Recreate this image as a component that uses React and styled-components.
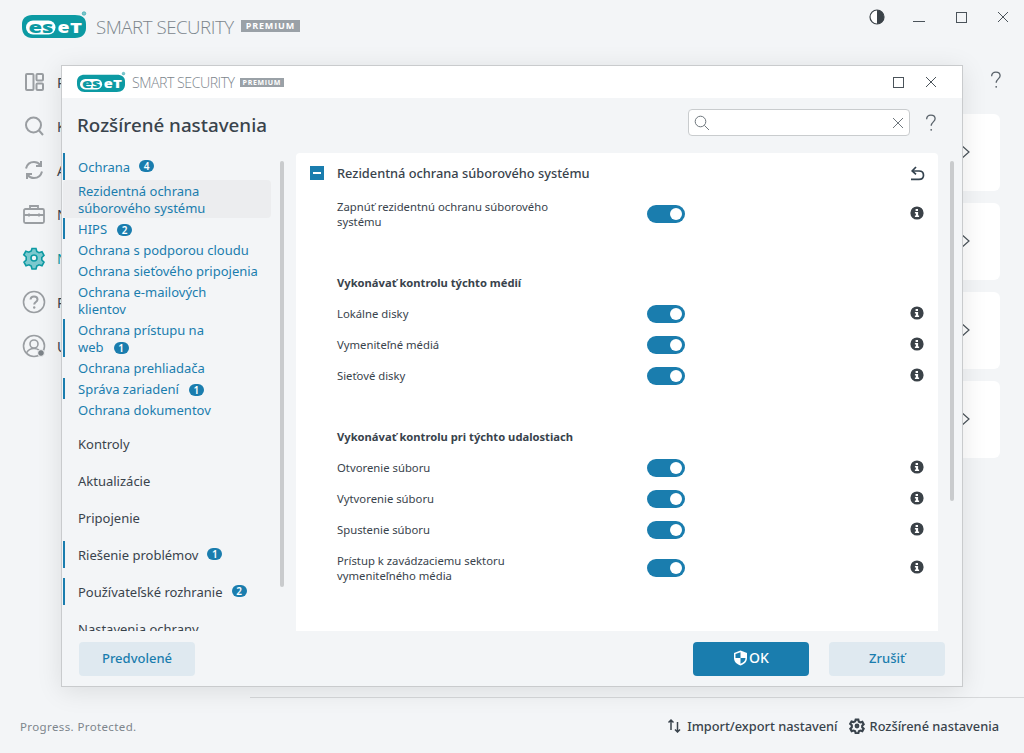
import React from "react";
import styled, { createGlobalStyle } from "styled-components";

const Global = createGlobalStyle`
  html, body { margin: 0; padding: 0; height: 100%; overflow: hidden; }
  body { font-family: "Noto Sans", "Open Sans", sans-serif; background: #f3f5f7; color: #38434c; }
  * { box-sizing: border-box; }
`;

const BLUE = "#1a7dae";
const TEAL = "#0c9aa3";
const INK = "#39434c";

/* ---------- page behind the dialog ---------- */
const Page = styled.div`
  position: relative;
  width: 1024px;
  height: 753px;
  display: flex;
  flex-direction: column;
  overflow: hidden;
  background: #f3f5f7;
`;
const TopBar = styled.header`
  height: 70px;
  padding: 14px 0 0 22px;
  display: flex;
  align-items: flex-start;
  justify-content: space-between;
`;
const Brand = styled.div`
  display: flex;
  align-items: center;
  height: ${p => (p.$small ? 18 : 24)}px;
  margin-top: ${p => (p.$small ? 1 : 0)}px;
`;
const BrandName = styled.span`
  font-family: "Open Sans", sans-serif;
  font-weight: 300;
  font-size: ${p => (p.$small ? 14.2 : 18.7)}px;
  letter-spacing: ${p => (p.$small ? -0.5 : -0.48)}px;
  color: #7c858c;
  margin-left: ${p => (p.$small ? 7 : 10)}px;
  white-space: nowrap;
`;
const Badge = styled.span`
  background: #9aa1a7;
  color: #fff;
  font-family: "Open Sans", sans-serif;
  font-weight: 700;
  font-size: ${p => (p.$small ? 7 : 9)}px;
  letter-spacing: ${p => (p.$small ? 0.65 : 0.85)}px;
  line-height: ${p => (p.$small ? 9 : 12)}px;
  padding: 0 ${p => (p.$small ? 3 : 5)}px;
  margin-left: ${p => (p.$small ? 5 : 7)}px;
`;
const WindowControls = styled.div`
  display: flex;
  align-items: center;
  height: 16px;
  margin-top: -5px;
`;
const CtlSlot = styled.span`
  width: ${p => p.$w}px;
  display: flex;
  justify-content: center;
  color: #4a535a;
`;
const Body = styled.div`
  flex: 1;
  display: flex;
  min-height: 0;
`;
const SideNav = styled.nav`
  width: 250px;
  padding: 0 0 0 22px;
  display: flex;
  flex-direction: column;
  gap: 20px;
`;
const SideItem = styled.div`
  height: 24px;
  display: flex;
  align-items: center;
  gap: 11px;
  font-size: 14px;
  color: ${p => (p.$active ? TEAL : INK)};
`;
const MainArea = styled.main`
  flex: 1;
  position: relative;
  padding: 0 24px 0 20px;
`;
const HelpRow = styled.div`
  height: 44px;
  margin-right: -6px;
  display: flex;
  justify-content: flex-end;
  align-items: flex-start;
  color: #59626a;
`;
const Cards = styled.div`
  display: flex;
  flex-direction: column;
  gap: 12px;
`;
const Card = styled.div`
  height: 77px;
  background: #fff;
  border-radius: 6px;
  display: flex;
  align-items: center;
  justify-content: flex-end;
  padding: 0 30px 1px 0;
  color: #4a535a;
`;
const Footer = styled.footer`
  height: 56px;
  margin-left: 250px;
  border-top: 1px solid #d6d8da;
  display: flex;
  align-items: center;
  justify-content: flex-end;
  padding-right: 25px;
  gap: 11px;
`;
const Tagline = styled.span`
  position: absolute;
  left: 20px;
  bottom: 19px;
  font-size: 11.5px;
  letter-spacing: 0.38px;
  color: #7d858c;
`;
const FooterLink = styled.span`
  display: flex;
  align-items: center;
  gap: 5px;
  font-size: 12.8px;
  font-weight: 500;
  color: ${INK};
`;

/* ---------- dialog window ---------- */
const Dialog = styled.section`
  position: absolute;
  left: 61px;
  top: 65px;
  width: 902px;
  height: 622px;
  background: #f3f5f7;
  border: 1px solid #c9cbcd;
  box-shadow: 0 4px 24px rgba(0, 0, 0, 0.1);
  display: flex;
  flex-direction: column;
`;
const TitleBar = styled.div`
  height: 32px;
  flex: none;
  background: #fff;
  padding: 0 15px;
  display: flex;
  align-items: center;
  justify-content: space-between;
`;
const DlgControls = styled.div`
  display: flex;
  gap: 21px;
  align-items: center;
  color: #4a535a;
  margin-right: 10px;
`;
const DlgHeader = styled.div`
  height: 55px;
  flex: none;
  padding: 0 21px 0 15px;
  display: flex;
  align-items: center;
  justify-content: space-between;
`;
const Title = styled.h1`
  margin: -1px 0 0;
  font-size: 18.8px;
  font-weight: 500;
  color: ${INK};
`;
const SearchWrap = styled.div`
  display: flex;
  align-items: center;
  gap: 11px;
  color: #59626a;
  margin-top: -6px;
`;
const SearchBox = styled.div`
  width: 222px;
  height: 27px;
  background: #fff;
  border: 1px solid #c9ccce;
  border-radius: 4px;
  display: flex;
  align-items: center;
  justify-content: space-between;
  padding: 0 5px 0 5px;
  color: #6e767c;
`;
const DlgBody = styled.div`
  flex: 1;
  display: flex;
  min-height: 0;
`;
const TreeColumn = styled.div`
  width: 234px;
  flex: none;
  position: relative;
  padding-left: 1px;
  overflow: hidden;
`;
const TreeGroup = styled.div`
  margin-bottom: 10px;
`;
const TreeTop = styled.div`
  min-height: 27px;
  display: flex;
  align-items: center;
  gap: 9px;
  padding: 1px 0 0 ${p => (p.$bar ? 13 : 15)}px;
  border-left: ${p => (p.$bar ? `2px solid ${BLUE}` : "none")};
  font-size: 13px;
  line-height: 17px;
  color: ${p => (p.$open ? BLUE : INK)};
`;
const TreeSub = styled.div`
  width: 208px;
  padding: 3px 8px 1px ${p => (p.$bar ? 13 : 15)}px;
  border-left: ${p => (p.$bar ? `2px solid ${BLUE}` : "none")};
  border-radius: ${p => (p.$sel ? "4px" : "0")};
  background: ${p => (p.$sel ? "#ecedef" : "transparent")};
  font-size: 13px;
  line-height: 17px;
  color: ${BLUE};
`;
const Count = styled.span`
  display: inline-flex;
  align-items: center;
  justify-content: center;
  width: 15px;
  height: 12px;
  margin: -2px 0 0 ${p => (p.$inline ? 10 : 0)}px;
  border-radius: 6px;
  background: ${BLUE};
  color: #fff;
  font-size: 10px;
  font-weight: 600;
  line-height: 12px;
`;
const ScrollThumb = styled.div`
  position: absolute;
  top: ${p => p.$top}px;
  right: ${p => p.$right}px;
  width: 4px;
  height: ${p => p.$h}px;
  border-radius: 2px;
  background: #c9cbcd;
`;
const ContentColumn = styled.div`
  flex: 1;
  position: relative;
  padding: 0 24px 0 0;
  min-width: 0;
`;
const Panel = styled.div`
  height: 100%;
  background: #fff;
  border-radius: 4px 4px 0 0;
  padding: 12px 13px 0 14px;
  overflow: hidden;
`;
const PanelHead = styled.div`
  display: flex;
  align-items: center;
  height: 16px;
  margin-bottom: 17px;
`;
const Minus = styled.span`
  width: 14px;
  height: 14px;
  background: ${BLUE};
  display: flex;
  align-items: center;
  justify-content: center;
  margin-right: 13px;
  &::before {
    content: "";
    width: 8px;
    height: 2px;
    background: #fff;
  }
`;
const PanelTitle = styled.span`
  flex: 1;
  font-size: 12.8px;
  font-weight: 500;
  color: ${INK};
`;
const IconEnd = styled.span`
  width: 16px;
  display: flex;
  justify-content: center;
  color: ${INK};
  margin-bottom: ${p => (p.$lift ? 2 : 0)}px;
`;
const Row = styled.div`
  display: flex;
  align-items: center;
  min-height: ${p => (p.$tall ? 31 : 17)}px;
  margin-bottom: 13px;
  padding-left: 27px;
`;
const RowLabel = styled.span`
  width: 310px;
  padding-right: 70px;
  flex: none;
  font-size: 11.3px;
  line-height: 15px;
  color: ${INK};
  margin-bottom: ${p => (p.$lift ? 2 : 0)}px;
`;
const Toggle = styled.span`
  width: 38px;
  height: 18px;
  border-radius: 9px;
  background: ${BLUE};
  display: flex;
  align-items: center;
  justify-content: flex-end;
  padding-right: 3px;
  &::after {
    content: "";
    width: 12px;
    height: 12px;
    border-radius: 50%;
    background: #fff;
  }
`;
const Spring = styled.span`
  flex: 1;
`;
const SectionHead = styled.div`
  font-size: 11.2px;
  font-weight: 700;
  line-height: 16px;
  padding-left: 27px;
  color: ${INK};
  margin: ${p => p.$top}px 0 14px;
`;
const DlgFooter = styled.div`
  height: 55px;
  flex: none;
  display: flex;
  align-items: center;
  padding: 0 17px 0 17px;
  gap: 20px;
`;
const Button = styled.button`
  width: 116px;
  height: 34px;
  border: 0;
  border-radius: 4px;
  font: 500 ${p => (p.$primary ? 14 : 13)}px "Noto Sans", sans-serif;
  background: ${p => (p.$primary ? BLUE : "#dfe9f0")};
  color: ${p => (p.$primary ? "#fff" : BLUE)};
  display: flex;
  align-items: center;
  justify-content: center;
  gap: 1px;
  padding: 0 0 2px;
  margin-left: ${p => (p.$push ? "auto" : 0)};
`;

/* ---------- drawings ---------- */
const Svg = ({ s = 16, vb = 24, children, ...r }) => (
  <svg width={s} height={s} viewBox={`0 0 ${vb} ${vb}`} fill="none" stroke="currentColor" {...r}>
    {children}
  </svg>
);
const Logo = ({ w }) => (
  <svg width={w} height={w * 0.375} viewBox="0 0 64 24" style={{ overflow: "visible" }}>
    <path d="M10 1H53C60 1 64 4 64 10V14C64 20 60 24 53 24H10C4 24 0 20 0 13V10C0 4.500 4 1 10 1Z" fill={TEAL} />
    <rect x="4" y="6.500" width="29.500" height="14" rx="7" fill="#fff" />
    <text x="6.500" y="18.500" fontFamily="Open Sans, sans-serif" fontWeight="800" fontSize="16.500" fill={TEAL} textLength="25" lengthAdjust="spacingAndGlyphs">es</text>
    <text x="35.500" y="18.500" fontFamily="Open Sans, sans-serif" fontWeight="800" fontSize="16.500" fill="#fff" textLength="12" lengthAdjust="spacingAndGlyphs">e</text>
    <text x="48" y="18.500" fontFamily="Open Sans, sans-serif" fontWeight="800" fontSize="13.500" fill="#fff" textLength="12" lengthAdjust="spacingAndGlyphs">T</text>
    <circle cx="62" cy="-0.500" r="1.800" fill="#7fc7cb" stroke={TEAL} strokeWidth="0.500" />
  </svg>
);
const Close = ({ s = 12 }) => (
  <Svg s={s} vb={12} strokeWidth="1"><path d="M1 1 11 11M11 1 1 11" /></Svg>
);
const Maxi = ({ s = 11 }) => (
  <Svg s={s} vb={11} strokeWidth="1"><rect x="0.5" y="0.5" width="10" height="10" /></Svg>
);
const Help = ({ s = 20 }) => (
  <svg width={s} height={s} viewBox="0 0 20 20" fill="none" stroke="currentColor" strokeWidth="1.3">
    <path d="M5.6 6.2C5.8 3.6 7.6 2.2 9.9 2.2c2.5 0 4.2 1.5 4.2 3.6 0 3-3.9 3.3-3.9 7" />
    <circle cx="10.2" cy="16.8" r="0.9" fill="currentColor" stroke="none" />
  </svg>
);
const Info = () => (
  <svg width="14" height="14" viewBox="0 0 14 14">
    <circle cx="7" cy="7" r="6.6" fill="#3b4248" />
    <path d="M5.6 3h2.4v1.9H5.6zM4.9 6h3.2v3.6h1v1.5H4.9V9.6h1V7.5h-1z" fill="#fff" />
  </svg>
);
const Undo = () => (
  <Svg s={15} vb={15} strokeWidth="1.7" style={{ color: "#33424e" }}>
    <path d="M1 13.300H9c2.800 0 4.500-1.700 4.500-4.100S11.800 5 9 5H2.600" />
    <path d="M6 1 2.200 5 6 8.400" />
  </Svg>
);
const Chevron = () => (
  <Svg s={20} vb={20} strokeWidth="1.200"><path d="M10.500 2.500 19 10 10.500 17.500" /></Svg>
);
const SearchIcon = () => (
  <Svg s={16} vb={16} strokeWidth="1"><circle cx="6.500" cy="6.500" r="5.300" /><path d="M10.400 10.400 15 15" /></Svg>
);
const Contrast = () => (
  <svg width="16" height="16" viewBox="0 0 16 16">
    <circle cx="8" cy="8" r="7" fill="#fff" stroke="#3a4248" strokeWidth="1.200" />
    <path d="M8 1a7 7 0 0 1 0 14z" fill="#3a4248" />
  </svg>
);
const Minimize = () => (
  <svg width="12" height="12" viewBox="0 0 12 12" stroke="currentColor"><path d="M0 10.500H12" /></svg>
);
const grey = "#9a9ea2";
const NavIcons = [
  <Svg key="a" s={24} vb={24} strokeWidth="2" style={{ color: grey }}>
    <rect x="4" y="4" width="7.500" height="16" rx="1" /><rect x="14.500" y="4" width="6.500" height="6.500" rx="1" /><rect x="14.500" y="13.500" width="6.500" height="6.500" rx="1" />
  </Svg>,
  <Svg key="b" s={24} vb={24} strokeWidth="2" style={{ color: grey }}>
    <circle cx="11.500" cy="11" r="7.500" /><path d="M17 16.500 21 21" />
  </Svg>,
  <Svg key="c" s={24} vb={24} strokeWidth="2" style={{ color: grey }}>
    <path d="M4 10.500C5 6.500 8.200 4 12 4c2.600 0 4.900 1.200 6.400 3" /><path d="M19 3v5h-5" />
    <path d="M20 13.500c-1 4-4.200 6.500-8 6.500-2.600 0-4.900-1.200-6.400-3" /><path d="M5 21v-5h5" />
  </Svg>,
  <Svg key="d" s={24} vb={24} strokeWidth="1.800" style={{ color: grey }}>
    <rect x="2" y="7" width="20" height="14" rx="1.500" /><path d="M8 7V4h8v3M2 13h20M7 11.500v3M17 11.500v3" />
  </Svg>,
  <svg key="e" width="24" height="24" viewBox="0 0 24 24" fill="#7cc9ce" stroke={TEAL} strokeWidth="1.600">
    <path d="M10 2.500h4l.8 3 2.200 1.200 3-.9 2 3.500-2.200 2.200v2.500l2.200 2.200-2 3.500-3-.9-2.200 1.200-.8 3h-4l-.8-3-2.200-1.200-3 .9-2-3.500 2.200-2.200V11L1.800 8.800l2-3.500 3 .9L9.200 5z" />
    <circle cx="12" cy="12" r="3" fill="#f3f5f7" />
  </svg>,
  <Svg key="f" s={24} vb={24} strokeWidth="1.600" style={{ color: grey }}>
    <circle cx="12" cy="12" r="10.500" /><path d="M8.500 9.500C8.700 7.500 10.200 6.500 12 6.500c2 0 3.500 1.200 3.500 3 0 2.500-3.300 2.500-3.300 5" strokeWidth="2" />
    <circle cx="12.200" cy="17.500" r="1.200" fill={grey} stroke="none" />
  </Svg>,
  <svg key="g" width="24" height="24" viewBox="0 0 24 24" fill="none" stroke={grey} strokeWidth="1.600">
    <circle cx="12" cy="12" r="10.500" /><circle cx="12" cy="10" r="4" /><path d="M4.500 19c1.500-3 4-4.500 7.500-4.500 2 0 3.500.5 5 1.500" />
    <circle cx="19" cy="19" r="3.400" fill="#7d8388" stroke="#f3f5f7" strokeWidth="1" />
  </svg>,
];
const Transfer = () => (
  <Svg s={15} vb={15} strokeWidth="1.500" style={{ color: INK }}>
    <path d="M4 12V2M1.500 4.500 4 2l2.500 2.500" /><path d="M10.500 4v10M8 11.500l2.500 2.500 2.500-2.500" />
  </Svg>
);
const Gear = () => (
  <svg width="16" height="16" viewBox="0 0 24 24" fill="none" stroke={INK} strokeWidth="3.200">
    <path d="M10 2.500h4l.8 3 2.200 1.200 3-.9 2 3.500-2.200 2.200v2.500l2.200 2.200-2 3.500-3-.9-2.200 1.200-.8 3h-4l-.8-3-2.200-1.200-3 .9-2-3.500 2.200-2.200V11L1.800 8.800l2-3.500 3 .9L9.200 5z" />
    <circle cx="12" cy="12" r="2" />
  </svg>
);
const Shield = () => (
  <svg width="15" height="16" viewBox="0 0 15 16">
    <path d="M7.500.5 14 3v5c0 3.800-2.700 6.300-6.500 7.500C3.700 14.300 1 11.800 1 8V3z" fill="#fff" />
    <path d="M7.500 2.200V8H2.500V3.900zM7.500 8h5c0 2.800-2.100 4.700-5 5.800z" fill={BLUE} />
  </svg>
);

const nav = ["Prehľad", "Kontrola počítača", "Aktualizácia", "Nástroje", "Nastavenie", "Pomocník a podpora", "Účet ESET HOME"];
const Toggled = ({ label, tall }) => (
  <Row $tall={tall}>
    <RowLabel $lift={!tall}>{label}</RowLabel>
    <Toggle />
    <Spring />
    <IconEnd $lift><Info /></IconEnd>
  </Row>
);

export default function App() {
  return (
    <Page>
      <Global />
      <TopBar>
        <Brand>
          <Logo w={64} />
          <BrandName>SMART SECURITY</BrandName>
          <Badge>PREMIUM</Badge>
        </Brand>
        <WindowControls>
          <CtlSlot $w={42}><Contrast /></CtlSlot>
          <CtlSlot $w={42}><Minimize /></CtlSlot>
          <CtlSlot $w={42}><Maxi /></CtlSlot>
          <CtlSlot $w={42}><Close /></CtlSlot>
        </WindowControls>
      </TopBar>
      <Body>
        <SideNav>
          {nav.map((n, i) => (
            <SideItem key={n} $active={i === 4}>
              {NavIcons[i]}
              {n}
            </SideItem>
          ))}
        </SideNav>
        <MainArea>
          <HelpRow><Help /></HelpRow>
          <Cards>
            <Card><Chevron /></Card>
            <Card><Chevron /></Card>
            <Card><Chevron /></Card>
            <Card><Chevron /></Card>
          </Cards>
        </MainArea>
      </Body>
      <Footer>
        <FooterLink><Transfer />Import/export nastavení</FooterLink>
        <FooterLink><Gear />Rozšírené nastavenia</FooterLink>
      </Footer>
      <Tagline>Progress. Protected.</Tagline>

      <Dialog>
        <TitleBar>
          <Brand $small>
            <Logo w={48} />
            <BrandName $small>SMART SECURITY</BrandName>
            <Badge $small>PREMIUM</Badge>
          </Brand>
          <DlgControls><Maxi /><Close /></DlgControls>
        </TitleBar>
        <DlgHeader>
          <Title>Rozšírené nastavenia</Title>
          <SearchWrap>
            <SearchBox><SearchIcon /><Close /></SearchBox>
            <Help />
          </SearchWrap>
        </DlgHeader>
        <DlgBody>
          <TreeColumn>
            <TreeGroup>
              <TreeTop $bar $open>Ochrana<Count>4</Count></TreeTop>
              <TreeSub $sel>Rezidentná ochrana<br />súborového systému</TreeSub>
              <TreeSub $bar>HIPS<Count $inline>2</Count></TreeSub>
              <TreeSub>Ochrana s podporou cloudu</TreeSub>
              <TreeSub>Ochrana sieťového pripojenia</TreeSub>
              <TreeSub>Ochrana e-mailových<br />klientov</TreeSub>
              <TreeSub $bar>Ochrana prístupu na<br />web<Count $inline>1</Count></TreeSub>
              <TreeSub>Ochrana prehliadača</TreeSub>
              <TreeSub $bar>Správa zariadení<Count $inline>1</Count></TreeSub>
              <TreeSub>Ochrana dokumentov</TreeSub>
            </TreeGroup>
            <TreeGroup><TreeTop>Kontroly</TreeTop></TreeGroup>
            <TreeGroup><TreeTop>Aktualizácie</TreeTop></TreeGroup>
            <TreeGroup><TreeTop>Pripojenie</TreeTop></TreeGroup>
            <TreeGroup><TreeTop $bar>Riešenie problémov<Count>1</Count></TreeTop></TreeGroup>
            <TreeGroup><TreeTop $bar>Používateľské rozhranie<Count>2</Count></TreeTop></TreeGroup>
            <TreeGroup><TreeTop>Nastavenia ochrany</TreeTop></TreeGroup>
            <ScrollThumb $top={8} $right={12} $h={426} />
          </TreeColumn>
          <ContentColumn>
            <Panel>
              <PanelHead>
                <Minus />
                <PanelTitle>Rezidentná ochrana súborového systému</PanelTitle>
                <IconEnd><Undo /></IconEnd>
              </PanelHead>
              <Toggled tall label="Zapnúť rezidentnú ochranu súborového systému" />
              <SectionHead $top={46}>Vykonávať kontrolu týchto médií</SectionHead>
              <Toggled label="Lokálne disky" />
              <Toggled label="Vymeniteľné médiá" />
              <Toggled label="Sieťové disky" />
              <SectionHead $top={44}>Vykonávať kontrolu pri týchto udalostiach</SectionHead>
              <Toggled label="Otvorenie súboru" />
              <Toggled label="Vytvorenie súboru" />
              <Toggled label="Spustenie súboru" />
              <Toggled tall label="Prístup k zavádzaciemu sektoru vymeniteľného média" />
            </Panel>
            <ScrollThumb $top={8} $right={8} $h={340} />
          </ContentColumn>
        </DlgBody>
        <DlgFooter>
          <Button>Predvolené</Button>
          <Button $primary $push><Shield />OK</Button>
          <Button>Zrušiť</Button>
        </DlgFooter>
      </Dialog>
    </Page>
  );
}
